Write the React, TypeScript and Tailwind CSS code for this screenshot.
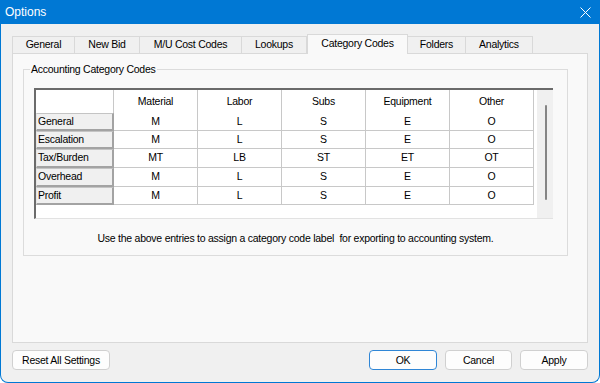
const TABS = [
  { label: "General", w: "w-[63px]" },
  { label: "New Bid", w: "w-[65px]" },
  { label: "M/U Cost Codes", w: "w-[102px]" },
  { label: "Lookups", w: "w-[65px]" },
  { label: "Category Codes", w: "w-[101px]", active: true },
  { label: "Folders", w: "w-[58px]" },
  { label: "Analytics", w: "w-[67px]" },
];

const COLS = ["Material", "Labor", "Subs", "Equipment", "Other"];

const ROWS = [
  { name: "General", codes: ["M", "L", "S", "E", "O"], h: "h-[18px]" },
  { name: "Escalation", codes: ["M", "L", "S", "E", "O"], h: "h-[18px]" },
  { name: "Tax/Burden", codes: ["MT", "LB", "ST", "ET", "OT"], h: "h-[19px]" },
  { name: "Overhead", codes: ["M", "L", "S", "E", "O"], h: "h-[19px]" },
  { name: "Profit", codes: ["M", "L", "S", "E", "O"], h: "h-[18px]" },
];

function DlgButton({ label, primary, w }: { label: string; primary?: boolean; w: string }) {
  return (
    <button
      className={`${w} h-[20px] rounded-[4px] border bg-[#fdfdfd] text-[10.5px] leading-none tracking-[-0.25px] text-black ${
        primary ? "border-[#2f86d6]" : "border-[#d0d0d0]"
      }`}
    >
      {label}
    </button>
  );
}

export default function App() {
  return (
    <div
      className="flex h-[383px] w-[600px] flex-col overflow-hidden rounded-b-[8px] border-x border-b border-[#0078d4] bg-[#f0f0f0] text-black"
      style={{ fontFamily: '"Liberation Sans", Arial, sans-serif' }}
    >
      {/* title bar */}
      <div className="flex h-[24px] shrink-0 items-center justify-between bg-[#0078d4] pl-[4px] pr-[8px] text-white">
        <span className="text-[12px]">Options</span>
        <svg width="11" height="11" viewBox="0 0 11 11" className="mt-[1px]">
          <path d="M0.5 0.5 L10.5 10.5 M10.5 0.5 L0.5 10.5" stroke="white" strokeWidth="1" fill="none" />
        </svg>
      </div>

      <div className="flex flex-1 flex-col px-[11px] text-[10.5px] tracking-[-0.25px]">
        {/* tabs */}
        <div className="mt-[10px] flex h-[19px] items-end">
          {TABS.map((t, i) =>
            t.active ? (
              <div
                key={t.label}
                className={`${t.w} relative z-10 -mb-px flex h-[20px] items-center justify-center border-x border-t border-[#d9d9d9] bg-[#f9f9f9] pb-[1px]`}
              >
                {t.label}
              </div>
            ) : (
              <div
                key={t.label}
                className={`${t.w} flex h-[17px] items-center justify-center border-t border-r border-[#d9d9d9] bg-[#f0f0f0] ${
                  i === 0 ? "border-l" : ""
                }`}
              >
                {t.label}
              </div>
            )
          )}
        </div>

        {/* tab panel */}
        <div className="h-[290px] w-[576px] border border-[#d9d9d9] bg-[#f9f9f9] px-[10px] pt-[8px]">
          <fieldset className="w-[545px] border border-[#dcdcdc] pb-[10px]">
            <legend className="ml-[6px] px-[1px] leading-[14px]">Accounting Category Codes</legend>

            {/* grid */}
            <div className="ml-[10px] mt-[12px] flex h-[131px] w-[519px] border-t-2 border-l-2 border-b border-[#6b6b6b] border-b-[#e2e2e2] bg-white">
              <div className="flex-1">
                <div className="flex h-[23px]">
                  <div className="w-[78px] border-r border-[#c8c8c8]" />
                  {COLS.map((c) => (
                    <div
                      key={c}
                      className="flex w-[84px] items-center justify-center border-r border-[#c8c8c8] pt-[1px]"
                    >
                      {c}
                    </div>
                  ))}
                </div>
                {ROWS.map((r) => (
                  <div key={r.name} className={`flex ${r.h}`}>
                    <div className="flex w-[78px] items-center border-t border-l border-b-2 border-r-2 border-[#a3a3a3] border-t-[#c4c4c4] border-l-[#e6e6e6] bg-[#f0f0f0] pl-[1px]">
                      {r.name}
                    </div>
                    {r.codes.map((c, i) => (
                      <div
                        key={i}
                        className="flex w-[84px] items-center justify-center border-r border-b border-[#c8c8c8]"
                      >
                        {c}
                      </div>
                    ))}
                  </div>
                ))}
              </div>
              <div className="flex w-[16px] flex-col items-center bg-[#f0f0f0] pt-[15px]">
                <div className="ml-[1px] h-[95px] w-[2px] rounded-full bg-[#858585]" />
              </div>
            </div>

            <p className="mt-[13px] text-center leading-[13px]">
              Use the above entries to assign a category code label&nbsp; for exporting to accounting system.
            </p>
          </fieldset>
        </div>

        {/* buttons */}
        <div className="mt-[7px] flex items-center">
          <DlgButton label="Reset All Settings" w="w-[98px]" />
          <div className="ml-auto flex gap-[8px]">
            <DlgButton label="OK" w="w-[68px]" primary />
            <DlgButton label="Cancel" w="w-[67px]" />
            <DlgButton label="Apply" w="w-[68px]" />
          </div>
        </div>
      </div>
    </div>
  );
}
